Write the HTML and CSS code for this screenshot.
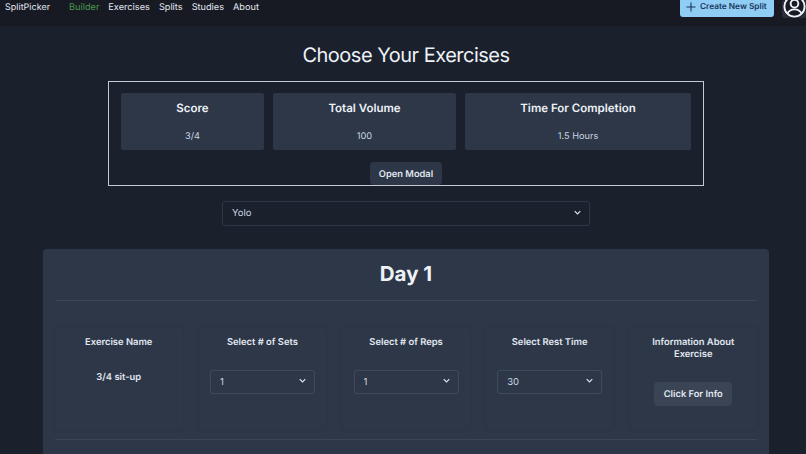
FILE: index.html
```html
<!DOCTYPE html>
<html lang="en">
<head>
<meta charset="utf-8">
<title>SplitPicker</title>
<link rel="stylesheet" href="styles.css">
</head>
<body>
<header class="nav">
  <span class="brand">SplitPicker</span>
  <nav class="links">
    <a class="link active">Builder</a>
    <a class="link">Exercises</a>
    <a class="link">Splits</a>
    <a class="link">Studies</a>
    <a class="link">About</a>
  </nav>
  <button class="create">
    <svg class="plus" viewBox="0 0 10 10" width="10" height="10"><path d="M5 .5v9M.5 5h9" fill="none" stroke="currentColor" stroke-width="1.1"/></svg>
    <span>Create New Split</span>
  </button>
  <div class="avatar">
    <svg viewBox="0 0 24 24" width="23" height="23" fill="none" stroke="#edf2f7" stroke-width="2"><circle cx="12" cy="12" r="10.6"/><circle cx="12" cy="9" r="4"/><path d="M4.6 19.4c1.5-3 4.2-4.4 7.4-4.4s5.900 1.400 7.400 4.400"/></svg>
  </div>
</header>
<main class="page">
  <h1 class="title">Choose Your Exercises</h1>
  <section class="summary">
    <div class="stats">
      <div class="stat"><h2>Score</h2><p>3/4</p></div>
      <div class="stat"><h2>Total Volume</h2><p>100</p></div>
      <div class="stat"><h2>Time For Completion</h2><p>1.5 Hours</p></div>
    </div>
    <button class="btn modal">Open Modal</button>
  </section>
  <div class="select-wrap split">
    <select><option>Yolo</option></select>
    <svg class="chev" viewBox="0 0 10 6" width="7" height="5"><path d="M1 1l4 4 4-4" fill="none" stroke="#e2e8f0" stroke-width="1.600"/></svg>
  </div>
  <section class="day">
    <h2 class="day-title">Day 1</h2>
    <hr class="rule">
    <div class="row">
      <div class="cell">
        <h3>Exercise Name</h3>
        <p class="name">3/4 sit-up</p>
      </div>
      <div class="cell">
        <h3>Select # of Sets</h3>
        <div class="select-wrap small">
          <select><option>1</option></select>
          <svg class="chev" viewBox="0 0 10 6" width="7" height="5"><path d="M1 1l4 4 4-4" fill="none" stroke="#e2e8f0" stroke-width="1.600"/></svg>
        </div>
      </div>
      <div class="cell">
        <h3>Select # of Reps</h3>
        <div class="select-wrap small">
          <select><option>1</option></select>
          <svg class="chev" viewBox="0 0 10 6" width="7" height="5"><path d="M1 1l4 4 4-4" fill="none" stroke="#e2e8f0" stroke-width="1.600"/></svg>
        </div>
      </div>
      <div class="cell">
        <h3>Select Rest Time</h3>
        <div class="select-wrap small">
          <select><option>30</option></select>
          <svg class="chev" viewBox="0 0 10 6" width="7" height="5"><path d="M1 1l4 4 4-4" fill="none" stroke="#e2e8f0" stroke-width="1.600"/></svg>
        </div>
      </div>
      <div class="cell">
        <h3>Information About Exercise</h3>
        <button class="btn info">Click For Info</button>
      </div>
    </div>
    <hr class="rule">
  </section>
</main>
</body>
</html>
```
FILE: styles.css
```css
* { box-sizing: border-box; }
html, body { margin: 0; height: 454px; overflow: hidden; }
body { background: #1a202c; color: #edf2f7; font-family: Inter, "Liberation Sans", sans-serif; text-rendering: geometricPrecision; }
h1, h2, h3, p { margin: 0; }
button { font-family: inherit; border: 0; cursor: pointer; white-space: nowrap; text-rendering: geometricPrecision; }

.nav { display: flex; align-items: flex-start; width: 806px; height: 26px; background: #171923; padding-left: 5px; overflow: hidden; }
.brand { font-size: 9px; line-height: 16px; color: #e2e8f0; width: 64px; }
.links { display: flex; gap: 9px; flex: 1; font-size: 9.2px; line-height: 16px; color: #e2e8f0; }
.active { color: #48994f; }
.create { display: flex; align-items: center; gap: 4px; height: 20px; width: 94px; margin-top: -3px; padding: 0 6px; border-radius: 3px; background: #90cdf4; color: #1a365d; font-size: 8.3px; font-weight: 600; }
.plus { flex: none; }
.avatar { width: 25px; height: 18px; margin-left: 8px; margin-right: -1px; background: #2b2f3a; border-radius: 3px; display: flex; justify-content: center; }
.avatar svg { margin-top: -5px; background: #171923; border-radius: 50%; }

.page { display: flex; flex-direction: column; align-items: center; width: 812px; }
.title { font-size: 20px; letter-spacing: -.5px; font-weight: 400; line-height: 28px; margin-top: 15px; color: #edf2f7; }
.summary { display: flex; flex-direction: column; align-items: center; width: 596px; height: 105px; margin-top: 12px; padding: 11px 10px 0 12px; border: 1.5px solid #c3cad4; }
.stats { display: grid; grid-template-columns: 143px 183px 226px; gap: 9px; width: 100%; }
.stat { height: 57px; background: #2d3748; border-radius: 2px; text-align: center; padding-top: 7px; }
.stat h2 { font-size: 11.500px; font-weight: 600; line-height: 16px; }
.stat p { font-size: 9.200px; line-height: 14px; margin-top: 14px; color: #cbd5e0; }

.btn { background: #2d3748; color: #e2e8f0; font-size: 9.300px; font-weight: 600; border-radius: 4px; }
.modal { width: 72px; height: 24px; margin: 12px 0 0 -2px; padding-top: 2px; }

.select-wrap { position: relative; }
.select-wrap select { appearance: none; width: 100%; height: 100%; background: transparent; font-family: inherit; font-size: 9.500px; color: #cbd5e0; border: 1.5px solid #2d3748; border-radius: 3px; padding: 0 9px; outline: none; text-rendering: geometricPrecision; }
.chev { position: absolute; right: 9px; top: 50%; margin-top: -2.5px; pointer-events: none; }
.split { width: 368px; height: 25px; margin-top: 14px; }

.day { width: 726px; height: 240px; margin-top: 24px; padding: 0 12px; background: #2d3748; border-radius: 4px; }
.day-title { font-size: 20.500px; font-weight: 700; text-align: center; line-height: 28px; padding-top: 11px; height: 51px; }
.rule { border: 0; height: 1px; margin: 0; background: #3b4557; }
.row { display: grid; grid-template-columns: repeat(5, 127.500px); justify-content: space-between; height: 103px; margin: 26px 0 9px; }
.cell { display: flex; flex-direction: column; align-items: center; text-align: center; padding: 10px 14px 0; border-radius: 4px; box-shadow: 0 0 3px rgba(30, 38, 52, .25); }
.cell h3 { font-size: 9.400px; font-weight: 600; line-height: 11.500px; color: #e2e8f0; }
.name { font-size: 9.400px; font-weight: 600; line-height: 12px; margin-top: 23px; color: #e2e8f0; }
.small { width: 105px; height: 24px; margin-top: 20px; }
.small select { border-color: #3f4a5d; }
.info { width: 78px; height: 24px; margin-top: 22px; background: #3b4454; }
```
